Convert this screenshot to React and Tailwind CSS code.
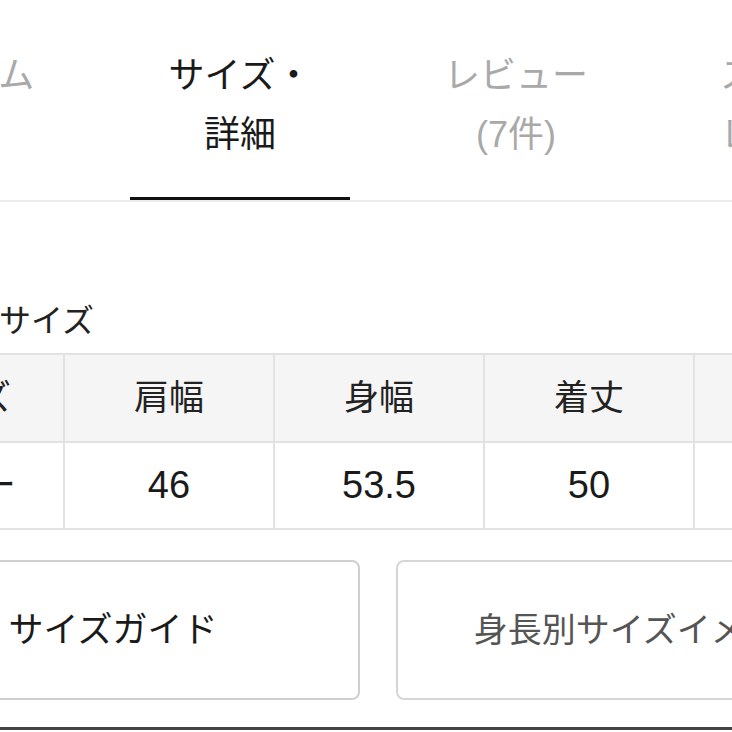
const tabs = [
  { l1: "アイテム", l2: "一覧", active: false },
  { l1: "サイズ・", l2: "詳細", active: true },
  { l1: "レビュー", l2: "(7件)", active: false },
  { l1: "スタッフ", l2: "レビュー", active: false },
];

const heads = ["サイズ", "肩幅", "身幅", "着丈", "袖丈"];
const vals = ["フリー", "46", "53.5", "50", "22"];

export default function App() {
  return (
    <div
      className="w-[732px] h-[732px] overflow-hidden bg-white"
      style={{ fontFamily: '"Liberation Sans", "Noto Sans CJK JP", sans-serif' }}
    >
      <div className="ml-[-147px] w-[1050px]">
        {/* Tabs */}
        <div className="flex border-b-2 border-[#ececec] ml-[-27px] w-[1104px]">
          {tabs.map((t, i) => (
            <div key={i} className="w-[276px] shrink-0 px-[28px]">
              <div
                className={`pt-[46px] pb-[33px] border-b-[3px] text-center text-[36px] leading-[59px] ${
                  t.active ? "border-[#111] text-[#1a1a1a]" : "border-transparent text-[#a9a9a9]"
                }`}
              >
                <div>{t.l1}</div>
                <div>{t.l2}</div>
              </div>
            </div>
          ))}
        </div>

        {/* Size heading */}
        <div className="mt-[95px] mb-[8px] pl-[82px] text-[32px] leading-[48px] text-[#222]">
          実寸サイズ
        </div>

        {/* Size table */}
        <table className="border-collapse w-[1050px] table-fixed">
          <tbody>
            <tr className="bg-[#f5f5f5]">
              {heads.map((h) => (
                <td
                  key={h}
                  className="w-[210px] h-[88px] border-2 border-[#e2e2e2] text-center text-[35px] text-[#222]"
                >
                  {h}
                </td>
              ))}
            </tr>
            <tr>
              {vals.map((v, i) => (
                <td
                  key={i}
                  className="w-[210px] h-[87px] border-2 border-[#e2e2e2] text-center text-[38px] text-[#1a1a1a]"
                >
                  {v}
                </td>
              ))}
            </tr>
          </tbody>
        </table>

        {/* Buttons */}
        <div className="flex gap-[36px] mt-[30px] ml-[13px]">
          <div className="w-[494px] h-[140px] shrink-0 flex items-center justify-center border-2 border-[#cfcfcf] rounded-[8px] text-[35px] text-[#1a1a1a]">
            サイズガイド
          </div>
          <div className="w-[494px] h-[140px] shrink-0 flex items-center justify-center border-2 border-[#d6d6d6] rounded-[8px] text-[34px] text-[#555]">
            身長別サイズイメージ
          </div>
        </div>
      </div>
      <div className="mt-[27px] h-[3px] bg-[#444] w-full" />
    </div>
  );
}
